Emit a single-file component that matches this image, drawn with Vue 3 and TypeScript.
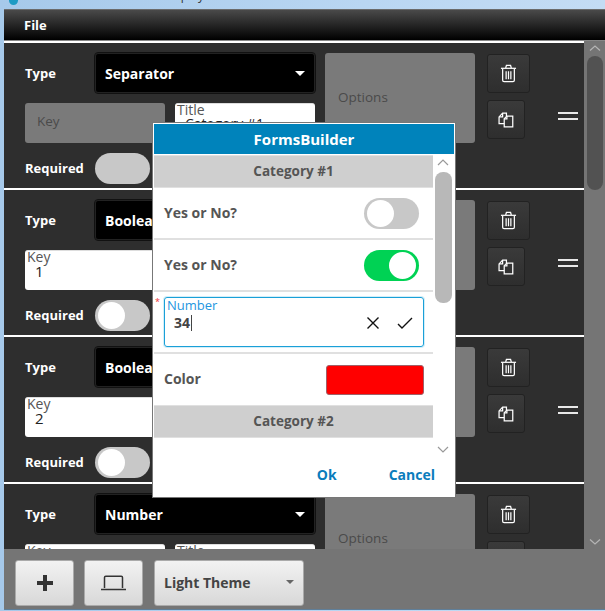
<template>
  <div class="desktop">
    <div class="titlebar">
      <span class="app-icon"></span>
      <span class="app-title">FormsBuilder - Display</span>
    </div>
    <div class="window">
      <div class="menubar"><span>File</span></div>
      <div class="main">
        <div class="list">
          <div v-for="row in rows" :key="row.type + row.key" class="row">
            <span class="lbl type-lbl">Type</span>
            <div class="select">
              <span>{{ row.type }}</span>
              <i class="caret"></i>
            </div>
            <div class="options">Options</div>
            <div class="actions">
              <button class="icon-btn trash" type="button">
                <svg width="17" height="19" viewBox="0 0 18 20" fill="none" stroke="#fff" stroke-width="1.3">
                  <path d="M1 4.5h16" />
                  <path d="M6 4.2 6.8 1.5h4.4l.8 2.7" />
                  <path d="M2.8 5v12.2c0 .9.6 1.5 1.5 1.5h9.4c.9 0 1.5-.6 1.5-1.5V5" />
                  <path d="M6.5 7.5v8.5M9 7.5v8.5M11.5 7.5v8.5" />
                </svg>
              </button>
              <button class="icon-btn copy" type="button">
                <svg width="16" height="16" viewBox="0 0 18 18" fill="none" stroke="#fff" stroke-width="1.4">
                  <path d="M7 13H1.2V5.5L5.2 1.2H9.5V5" />
                  <path d="M5.2 1.2V5.5H1.2" />
                  <path d="M7 16.8V7.5L10 4.6h6.6v12.2Z" />
                  <path d="M10 4.6v3H7" />
                </svg>
              </button>
            </div>
            <div class="drag"></div>
            <template v-if="row.disabled">
              <div class="field disabled key">Key</div>
            </template>
            <div v-else class="field key">
              <small>Key</small>
              <span>{{ row.key }}</span>
            </div>
            <div class="field title">
              <small>Title</small>
              <span>{{ row.title }}</span>
            </div>
            <span class="lbl req-lbl">Required</span>
            <div class="toggle" :class="{ off: row.disabled }"><b v-if="!row.disabled"></b></div>
          </div>
        </div>
        <div class="scroll">
          <svg class="chev" width="12" height="6" viewBox="0 0 12 6"><path d="M1 5.5 6 1l5 4.5" /></svg>
          <div class="thumb"></div>
          <svg class="chev bottom" width="12" height="6" viewBox="0 0 12 6"><path d="M1 .5 6 5l5-4.5" /></svg>
        </div>
      </div>
      <div class="toolbar">
        <button class="tool" type="button">
          <svg width="16" height="16" viewBox="0 0 16 16"><path d="M6 0h4v6h6v4h-6v6H6v-6H0V6h6Z" fill="#333" /></svg>
        </button>
        <button class="tool" type="button">
          <svg width="25" height="16" viewBox="0 0 25 16" fill="none" stroke="#333" stroke-width="1.5">
            <path d="M3.5 13V2.5c0-.8.5-1.3 1.3-1.3h15.4c.8 0 1.3.5 1.3 1.3V13" />
            <path d="M0 14.5h25" />
          </svg>
        </button>
        <button class="tool theme" type="button">
          <span>Light Theme</span>
          <i class="caret dark"></i>
        </button>
      </div>
    </div>

    <div class="dialog">
      <div class="dlg-head">FormsBuilder</div>
      <div class="dlg-body">
        <div class="dlg-list">
          <div class="cat">Category #1</div>
          <div class="item">
            <span>Yes or No?</span>
            <div class="switch"><b></b></div>
          </div>
          <div class="item">
            <span>Yes or No?</span>
            <div class="switch on"><b></b></div>
          </div>
          <div class="item num">
            <i class="star">*</i>
            <div class="num-box">
              <small>Number</small>
              <div class="num-val">
                <span class="val">34</span>
                <svg width="14" height="14" viewBox="0 0 14 14" fill="none" stroke="#111" stroke-width="1.4"><path d="M1.5 1.5l11 11M12.5 1.5l-11 11" /></svg>
                <svg class="ok-mark" width="16" height="12" viewBox="0 0 16 12" fill="none" stroke="#111" stroke-width="1.4"><path d="M1 7l4 4L15 1" /></svg>
              </div>
            </div>
          </div>
          <div class="item color">
            <span>Color</span>
            <div class="swatch"></div>
          </div>
          <div class="cat">Category #2</div>
        </div>
        <div class="dlg-scroll">
          <svg class="chev" width="12" height="7" viewBox="0 0 12 7"><path d="M1 6 6 1l5 5" /></svg>
          <div class="dlg-thumb"></div>
          <svg class="chev bottom" width="12" height="7" viewBox="0 0 12 7"><path d="M1 1l5 5 5-5" /></svg>
        </div>
      </div>
      <div class="dlg-foot">
        <span>Ok</span>
        <span>Cancel</span>
      </div>
    </div>
  </div>
</template>

<script setup lang="ts">
interface FieldRow {
  type: string
  key: string
  title: string
  disabled: boolean
}

const rows: FieldRow[] = [
  { type: 'Separator', key: '', title: 'Category #1', disabled: true },
  { type: 'Boolean', key: '1', title: 'Yes or No?', disabled: false },
  { type: 'Boolean', key: '2', title: 'Yes or No?', disabled: false },
  { type: 'Number', key: '3', title: 'Number', disabled: false },
]
</script>

<style>
html,
body {
  margin: 0;
  background: #a9cdee;
}
</style>

<style scoped>
.desktop {
  position: relative;
  width: 605px;
  height: 611px;
  overflow: hidden;
  font-family: "Open Sans", "Liberation Sans", sans-serif;
  background: linear-gradient(90deg, #a6c9ea, #b9d6f2 60%, #c4dcf4);
}

.titlebar {
  height: 9px;
  position: relative;
  overflow: hidden;
  display: flex;
}

.app-icon {
  width: 9px;
  height: 9px;
  margin: -4px 0 0 9px;
  border-radius: 50%;
  background: #1e9bc4;
}

.app-title {
  margin: -13px 0 0 60px;
  font-size: 12px;
  color: #333;
}

.window {
  margin-left: 4px;
  height: 601px;
  box-sizing: border-box;
  border-top: 1px solid #6b6b6b;
  border-bottom: 1px solid #5f7f9a;
  background: #757575;
  display: flex;
  flex-direction: column;
}

.menubar {
  height: 31px;
  flex: none;
  padding-left: 20px;
  display: flex;
  align-items: center;
  box-sizing: border-box;
  background: linear-gradient(#4a4a4a, #000);
  color: #fff;
  font-size: 13px;
  font-weight: 700;
  border-bottom: 1px solid #888;
}

.main {
  flex: none;
  height: 508px;
  display: flex;
  overflow: hidden;
}

.list {
  width: 580px;
  flex: none;
  background: #2e2e2e;
  border-top: 2px solid #fff;
  box-sizing: border-box;
  overflow: hidden;
}

.row {
  height: 147px;
  box-sizing: border-box;
  border-bottom: 2px solid #fff;
  padding: 10px 0 0 21px;
  display: grid;
  grid-template-columns: 70px 70px 10px 140px 10px 150px 12px 43px 28px 20px;
  grid-template-rows: 40px 40px 31px;
  row-gap: 10px;
  align-items: center;
}

.lbl {
  color: #fff;
  font-size: 13px;
  font-weight: 700;
}

.type-lbl {
  grid-column: 1;
  grid-row: 1;
}

.req-lbl {
  grid-column: 1;
  grid-row: 3;
  padding-bottom: 2px;
}

.select {
  grid-column: 2 / 5;
  grid-row: 1;
  height: 40px;
  box-sizing: border-box;
  background: #000;
  border: 1px solid #222;
  outline: 1px solid #111;
  border-radius: 3px;
  padding: 0 9px;
  display: flex;
  align-items: center;
  justify-content: space-between;
  color: #fff;
  font-size: 14px;
  font-weight: 700;
}

.caret {
  width: 0;
  height: 0;
  border-left: 5px solid transparent;
  border-right: 5px solid transparent;
  border-top: 5px solid #fff;
}

.caret.dark {
  border-left-width: 4px;
  border-right-width: 4px;
  border-top: 4px solid #666;
}

.options {
  grid-column: 6;
  grid-row: 1 / 3;
  height: 90px;
  box-sizing: border-box;
  padding: 0 0 3px 13px;
  display: flex;
  align-items: center;
  background: #7a7a7a;
  border-radius: 3px;
  color: #4a4a4a;
  font-size: 13.5px;
}

.actions {
  grid-column: 8;
  grid-row: 1 / 3;
  align-self: start;
  display: flex;
  flex-direction: column;
  gap: 7px;
  margin-top: 1px;
}

.icon-btn {
  height: 39px;
  padding: 0;
  display: flex;
  align-items: center;
  justify-content: center;
  background: linear-gradient(#3a3a3a, #2e2e2e);
  border: 1px solid #222;
  border-radius: 3px;
}

.trash {
  width: 43px;
}

.copy {
  width: 38px;
}

.drag {
  grid-column: 10;
  grid-row: 1 / 3;
  align-self: start;
  margin-top: 59px;
  height: 2px;
  border-top: 2px solid #e8e8e8;
  border-bottom: 2px solid #e8e8e8;
  padding: 1px 0;
  box-sizing: content-box;
}

.field {
  height: 40px;
  box-sizing: border-box;
  grid-row: 2;
  background: #fff;
  border-radius: 3px;
  border-top: 1px solid #ddd;
  padding: 0 0 0 2px;
  display: flex;
  flex-direction: column;
  font-size: 14px;
  line-height: 12px;
  color: #222;
}

.field small {
  font-size: 14px;
  line-height: 11px;
  color: #555;
}

.field span {
  margin-top: 3px;
  padding-left: 8px;
}

.key {
  grid-column: 1 / 3;
}

.key span {
  margin-top: 2px;
  font-size: 15px;
  line-height: 14px;
}

.title {
  grid-column: 4;
}

.field.disabled {
  justify-content: center;
  padding: 0 0 4px 12px;
  background: #7a7a7a;
  border-top: 0;
  color: #4a4a4a;
  font-size: 13.5px;
}

.toggle {
  grid-column: 2;
  grid-row: 3;
  width: 55px;
  height: 31px;
  box-sizing: border-box;
  padding: 2px 3px;
  border-radius: 16px;
  background: #c8c8c8;
}

.toggle b {
  display: block;
  width: 27px;
  height: 27px;
  border-radius: 50%;
  background: #fff;
}

.scroll {
  width: 21px;
  flex: none;
  background: #757575;
  display: flex;
  flex-direction: column;
  align-items: center;
  padding-top: 4px;
  box-sizing: border-box;
}

.chev {
  flex: none;
  fill: none;
  stroke: #b5b5b5;
  stroke-width: 1.2;
}

.thumb {
  width: 16px;
  height: 134px;
  margin-top: 5px;
  background: #525252;
  border-radius: 8px;
}

.chev.bottom {
  margin-top: auto;
  margin-bottom: 4px;
}

.toolbar {
  flex: 1;
  display: flex;
  gap: 10px;
  padding: 11px;
  box-sizing: border-box;
}

.tool {
  width: 59px;
  height: 46px;
  padding: 0;
  display: flex;
  align-items: center;
  justify-content: center;
  background: linear-gradient(#f2f2f2, #d8d8d8);
  border: 1px solid #aaa;
  border-radius: 3px;
}

.theme {
  width: 150px;
  margin-left: 1px;
  justify-content: space-between;
  padding: 0 9px 2px;
  font: 700 14px "Open Sans", "Liberation Sans", sans-serif;
  color: #444;
}

/* the modal preview sits over the list */
.dialog {
  position: absolute;
  left: 153px;
  top: 123px;
  width: 302px;
  height: 374px;
  box-sizing: border-box;
  background: #fff;
  border: 1px solid #fff;
  outline: 1px solid #777;
  display: flex;
  flex-direction: column;
}

.dlg-head {
  height: 30px;
  flex: none;
  display: flex;
  align-items: center;
  justify-content: center;
  background: #0083bb;
  color: #fff;
  font-size: 15px;
  font-weight: 700;
}

.dlg-body {
  display: flex;
  height: 300px;
  flex: none;
}

.dlg-list {
  width: 279px;
  flex: none;
  padding-top: 1px;
}

.cat {
  height: 33px;
  box-sizing: border-box;
  display: flex;
  align-items: center;
  justify-content: center;
  padding-bottom: 2px;
  background: #cfcfcf;
  border-top: 1px solid #e0e0e0;
  border-bottom: 1px solid #e0e0e0;
  color: #555;
  font-size: 13.5px;
  font-weight: 700;
}

.item {
  height: 52px;
  box-sizing: border-box;
  padding: 0 14px 0 10px;
  border-bottom: 2px solid #e0e0e0;
  display: flex;
  align-items: center;
  justify-content: space-between;
  color: #555;
  font-size: 14px;
  font-weight: 700;
}

.item > span {
  margin-top: -2px;
}

.switch {
  width: 55px;
  height: 31px;
  box-sizing: border-box;
  padding: 2px 3px;
  border-radius: 16px;
  background: #c8c8c8;
  display: flex;
}

.switch b {
  width: 27px;
  height: 27px;
  border-radius: 50%;
  background: #fff;
}

.switch.on {
  background: #00d254;
  justify-content: flex-end;
}

.num {
  height: 62px;
  position: relative;
  align-items: flex-start;
  padding-top: 5px;
  padding-right: 9px;
}

.star {
  position: absolute;
  left: 1px;
  top: 3px;
  color: #e33;
  font-size: 9px;
  font-style: normal;
  font-weight: 400;
}

.num-box {
  width: 260px;
  height: 50px;
  box-sizing: border-box;
  border: 1px solid #1aa0d8;
  box-shadow: 0 0 0 1px #d3eef8;
  border-radius: 3px;
  padding: 1px 2px;
}

.num-box small {
  display: block;
  color: #2496e0;
  font-size: 13px;
  font-weight: 400;
  line-height: 13px;
}

.num-val {
  display: flex;
  align-items: center;
  padding: 1px 8px 0 7px;
  gap: 17px;
}

.val {
  flex: 1;
  font-size: 14px;
  line-height: 20px;
  color: #444;
}

.val::after {
  content: "";
  display: inline-block;
  width: 1px;
  height: 16px;
  margin-left: 1px;
  background: #444;
  vertical-align: -3px;
}

.color {
  height: 51px;
  padding-right: 9px;
  border-bottom: 0;
}

.swatch {
  width: 98px;
  height: 30px;
  box-sizing: border-box;
  background: #f00;
  border: 1px solid #a06068;
  border-radius: 3px;
}

.dlg-scroll {
  flex: 1;
  display: flex;
  flex-direction: column;
  align-items: center;
  padding: 5px 1px 0 0;
}

.dlg-thumb {
  width: 17px;
  height: 131px;
  margin-top: 6px;
  background: #b8b8b8;
  border-radius: 8px;
}

.dlg-scroll .chev {
  stroke: #999;
}

.dlg-scroll .chev.bottom {
  margin-bottom: 1px;
}

.dlg-foot {
  flex: 1;
  display: flex;
  justify-content: flex-end;
  align-items: center;
  gap: 52px;
  padding: 0 19px 1px 0;
  color: #0a7cbc;
  font-size: 14px;
  font-weight: 700;
}
</style>
